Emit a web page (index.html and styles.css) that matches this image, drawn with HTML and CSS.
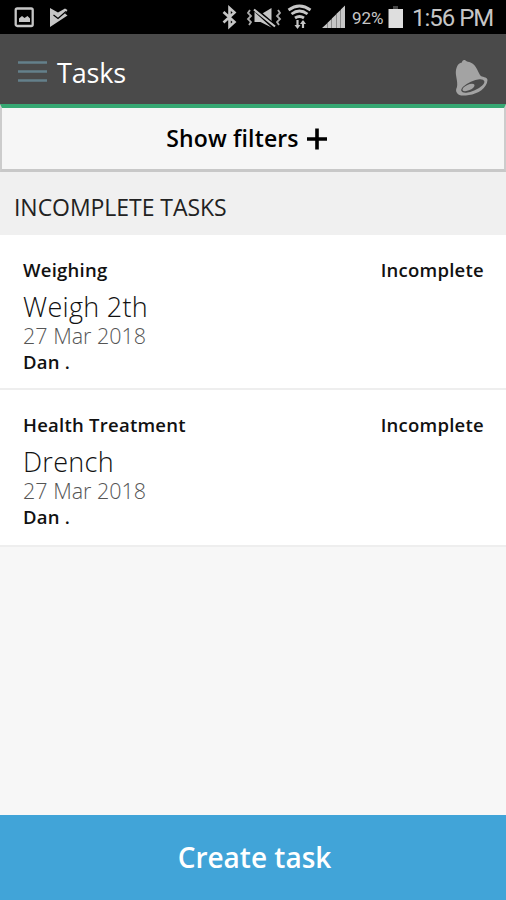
FILE: index.html
```html
<!DOCTYPE html>
<html lang="en">
<head>
<meta charset="utf-8">
<title>Tasks</title>
<link rel="stylesheet" href="styles.css">
</head>
<body>
<div class="statusbar">
  <svg class="notices" width="56" height="34" viewBox="0 0 56 34">
    <rect x="1.700" y="8.500" width="17" height="17.500" rx="1.500" fill="none" stroke="#c6c6c6" stroke-width="2.300"/>
    <path d="M5 22v-3.500l3-2.500 2.500 2 3-2 2.500 2.500v3.500z" fill="#c6c6c6"/>
    <path d="M36 8l8 4.500 7-4 2.500 1.500-2.500 3.500 2.500 2-17.500 11.500z" fill="#c6c6c6"/>
    <path d="M39.500 15l4.500 3.500 8-7" fill="none" stroke="#000" stroke-width="1.200"/>
  </svg>
  <svg class="signals" width="127" height="34" viewBox="0 0 127 34">
    <path d="M3.500 12l11 10-5 4.500V8l5 4.500-11 10" fill="none" stroke="#c6c6c6" stroke-width="2.600"/>
    <path d="M30 10l-2 3 3 3-3 3 3 3-2 3M58 10l2 3-3 3 3 3-3 3 2 3" fill="none" stroke="#aaa" stroke-width="1.800"/>
    <path d="M34.500 12h5.500l11.500 11V8l-10 6M34.500 12v10h6l11 5.500" fill="#c6c6c6"/>
    <path d="M34 8l21 18" stroke="#000" stroke-width="3.500"/>
    <path d="M34 9.500l21 17" stroke="#c6c6c6" stroke-width="2.200"/>
    <path d="M68.500 10q11-8 22 0M71.500 14q8-6 16 0M75 18q4.500-3 9 0" fill="none" stroke="#c6c6c6" stroke-width="2.800"/>
    <path d="M77.500 20v7M83 28v-7" stroke="#c6c6c6" stroke-width="2.200"/>
    <path d="M74.500 25h6l-3 4zM80 24l3-4 3 4z" fill="#c6c6c6"/>
    <path d="M102 28l5-4.500V28zM107.300 28v-5l4.200-4v9zM111.800 28v-9.500l4.200-4V28zM116.300 28V14l4.200-4v18zM120.800 28V9.500l4.200-4V28z" fill="#c6c6c6"/>
  </svg>
  <span class="percent">92%</span>
  <svg class="battery" width="16" height="34" viewBox="0 0 16 34">
    <path d="M5 6h5v3H5z" fill="#444"/><path d="M.5 9h14.500v19H.5z" fill="#dedede"/>
  </svg>
  <span class="clock">1:56 PM</span>
</div>
<header class="header">
  <svg class="menu" width="29" height="24" viewBox="0 0 29 24">
    <path d="M0 2.500h29M0 11.500h29M0 20.500h29" stroke="#64808b" stroke-width="2.600"/>
  </svg>
  <h1 class="title">Tasks</h1>
  <svg class="bell" width="34" height="38" viewBox="0 0 34 38">
    <path d="M2 34C.5 32 1 30 2 28C3 22 0 16 1 11C2 6 4 4 7 3.500C7 .5 10 0 12 2.500C21 4 22 11 25 16C27 19 32 17 32.500 21C32 29 23 35 14 36C8 37 4 37 2 34Z" fill="#a3a3a3"/>
    <ellipse cx="17.800" cy="27" rx="12.500" ry="4.700" transform="rotate(-24 17.800 27)" fill="#4a4a4a"/>
    <ellipse cx="13.500" cy="28.500" rx="6.500" ry="2.800" transform="rotate(-24 13.500 28.500)" fill="#a3a3a3"/>
  </svg>
</header>
<div class="filters">
  <span class="filters-label">Show filters</span>
  <svg class="plus" width="20" height="22" viewBox="0 0 20 22"><path d="M0 11h20M10 .5v21" stroke="#000" stroke-width="3.600"/></svg>
</div>
<h2 class="section">INCOMPLETE TASKS</h2>
<main>
  <article class="task">
    <div class="task-head"><span>Weighing</span><span class="state">Incomplete</span></div>
    <div class="name">Weigh 2th</div>
    <div class="date">27 Mar 2018</div>
    <div class="person">Dan .</div>
  </article>
  <article class="task">
    <div class="task-head"><span>Health Treatment</span><span class="state">Incomplete</span></div>
    <div class="name">Drench</div>
    <div class="date">27 Mar 2018</div>
    <div class="person">Dan .</div>
  </article>
</main>
<footer class="create"><span>Create task</span></footer>
</body>
</html>
```
FILE: styles.css
```css
* { box-sizing: border-box; }
body {
  margin: 0;
  height: 900px;
  display: flex;
  flex-direction: column;
  overflow: hidden;
  background: #f7f7f7;
  font-family: "Open Sans", sans-serif;
  color: #111;
  white-space: nowrap;
}
svg { flex: none; display: block; }
.statusbar {
  height: 34px;
  flex: none;
  display: flex;
  background: #000;
  color: #c6c6c6;
  font-family: Roboto, sans-serif;
  line-height: 36px;
}
.notices { margin-left: 14px; }
.signals { margin-left: 150px; }
.percent { width: 41px; padding-left: 5px; font-size: 17px; }
.clock { margin-left: 8px; font-size: 24px; letter-spacing: -1px; }
.header {
  height: 70px;
  flex: none;
  display: flex;
  background: #4a4a4a;
}
.menu { margin: 26px 0 0 18px; }
.title {
  margin: 0 0 0 10px;
  font-size: 27px;
  font-weight: 400;
  letter-spacing: -0.2px;
  line-height: 77px;
  color: #fff;
}
.bell { margin: 25px 17px 0 auto; }
.filters {
  height: 68px;
  flex: none;
  display: flex;
  justify-content: center;
  border: 2px solid #ccc;
  border-top: 4px solid #36a873;
  border-bottom: 3px solid #c8c8c8;
  background: #f6f6f6;
}
.filters-label { font-size: 23px; font-weight: 600; letter-spacing: 0.15px; line-height: 61px; color: #000; }
.plus { margin: 20px 13px 0 8px; }
.section {
  height: 63px;
  flex: none;
  margin: 0;
  padding-left: 14px;
  background: #f0f0f0;
  font-size: 23px;
  font-weight: 400;
  letter-spacing: -0.05px;
  line-height: 71px;
  color: #222;
}
.task {
  height: 155px;
  padding: 22px 22px 0 23px;
  background: #fff;
  border-bottom: 2px solid #eee;
}
.task:last-child { height: 157px; }
.task-head { display: flex; justify-content: space-between; }
.task-head, .person { font-size: 18.5px; font-weight: 600; letter-spacing: 0.25px; line-height: 26px; }
.name { font-size: 27px; font-weight: 300; letter-spacing: 0.3px; line-height: 34px; margin-top: 7px; }
.date { font-size: 21.5px; font-weight: 300; line-height: 22px; margin-top: 1px; color: #555; }
.person { margin-top: 2px; }
.create {
  height: 85px;
  flex: none;
  margin-top: auto;
  padding-left: 3px;
  background: #41a4d8;
  color: #fff;
  font-size: 28px;
  font-weight: 600;
  line-height: 84px;
  text-align: center;
}
```
